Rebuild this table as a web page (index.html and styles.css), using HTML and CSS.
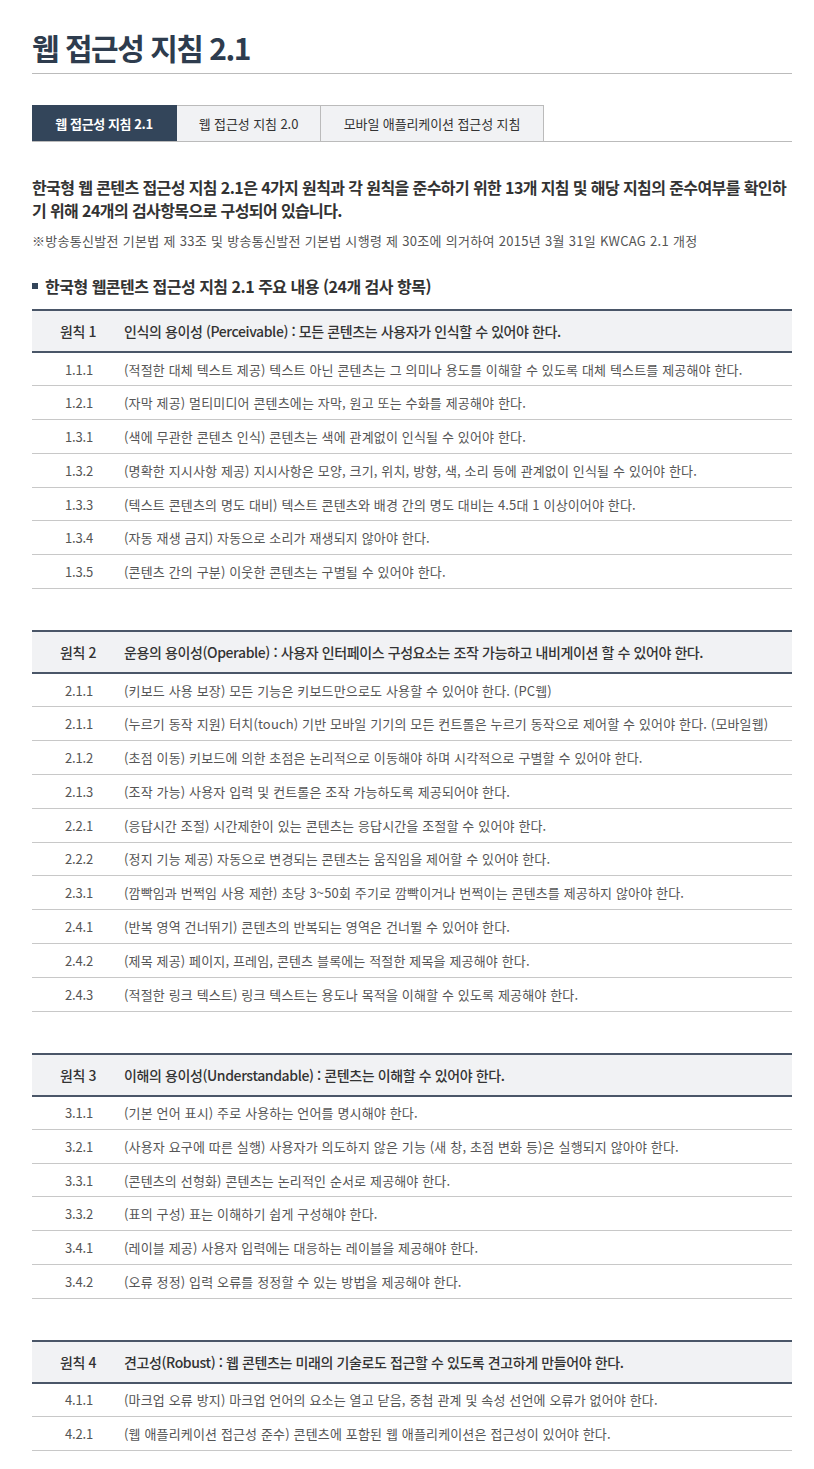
FILE: index.html
```html
<!DOCTYPE html>
<html lang="ko">
<head>
<meta charset="utf-8">
<title>웹 접근성 지침 2.1</title>
<link rel="stylesheet" href="styles.css">
</head>
<body>
<div class="page">
  <h1 class="title">웹 접근성 지침 2.1</h1>

  <ul class="tabs">
    <li class="tab active">웹 접근성 지침 2.1</li>
    <li class="tab">웹 접근성 지침 2.0</li>
    <li class="tab">모바일 애플리케이션 접근성 지침</li>
  </ul>

  <p class="intro">한국형 웹 콘텐츠 접근성 지침 2.1은 4가지 원칙과 각 원칙을 준수하기 위한 13개 지침 및 해당 지침의 준수여부를 확인하기 위해 24개의 검사항목으로 구성되어 있습니다.</p>
  <p class="note">※방송통신발전 기본법 제 33조 및 방송통신발전 기본법 시행령 제 30조에 의거하여 2015년 3월 31일 KWCAG 2.1 개정</p>

  <h2 class="section-title">한국형 웹콘텐츠 접근성 지침 2.1 주요 내용 (24개 검사 항목)</h2>

  <table class="guide">
    <thead><tr><th class="num">원칙 1</th><th class="desc">인식의 용이성 (Perceivable) : 모든 콘텐츠는 사용자가 인식할 수 있어야 한다.</th></tr></thead>
    <tbody>
      <tr><td class="num">1.1.1</td><td class="desc">(적절한 대체 텍스트 제공) 텍스트 아닌 콘텐츠는 그 의미나 용도를 이해할 수 있도록 대체 텍스트를 제공해야 한다.</td></tr>
      <tr><td class="num">1.2.1</td><td class="desc">(자막 제공) 멀티미디어 콘텐츠에는 자막, 원고 또는 수화를 제공해야 한다.</td></tr>
      <tr><td class="num">1.3.1</td><td class="desc">(색에 무관한 콘텐츠 인식) 콘텐츠는 색에 관계없이 인식될 수 있어야 한다.</td></tr>
      <tr><td class="num">1.3.2</td><td class="desc">(명확한 지시사항 제공) 지시사항은 모양, 크기, 위치, 방향, 색, 소리 등에 관계없이 인식될 수 있어야 한다.</td></tr>
      <tr><td class="num">1.3.3</td><td class="desc">(텍스트 콘텐츠의 명도 대비) 텍스트 콘텐츠와 배경 간의 명도 대비는 4.5대 1 이상이어야 한다.</td></tr>
      <tr><td class="num">1.3.4</td><td class="desc">(자동 재생 금지) 자동으로 소리가 재생되지 않아야 한다.</td></tr>
      <tr><td class="num">1.3.5</td><td class="desc">(콘텐츠 간의 구분) 이웃한 콘텐츠는 구별될 수 있어야 한다.</td></tr>
    </tbody>
  </table>

  <table class="guide">
    <thead><tr><th class="num">원칙 2</th><th class="desc">운용의 용이성(Operable) : 사용자 인터페이스 구성요소는 조작 가능하고 내비게이션 할 수 있어야 한다.</th></tr></thead>
    <tbody>
      <tr><td class="num">2.1.1</td><td class="desc">(키보드 사용 보장) 모든 기능은 키보드만으로도 사용할 수 있어야 한다. (PC웹)</td></tr>
      <tr><td class="num">2.1.1</td><td class="desc">(누르기 동작 지원) 터치(touch) 기반 모바일 기기의 모든 컨트롤은 누르기 동작으로 제어할 수 있어야 한다. (모바일웹)</td></tr>
      <tr><td class="num">2.1.2</td><td class="desc">(초점 이동) 키보드에 의한 초점은 논리적으로 이동해야 하며 시각적으로 구별할 수 있어야 한다.</td></tr>
      <tr><td class="num">2.1.3</td><td class="desc">(조작 가능) 사용자 입력 및 컨트롤은 조작 가능하도록 제공되어야 한다.</td></tr>
      <tr><td class="num">2.2.1</td><td class="desc">(응답시간 조절) 시간제한이 있는 콘텐츠는 응답시간을 조절할 수 있어야 한다.</td></tr>
      <tr><td class="num">2.2.2</td><td class="desc">(정지 기능 제공) 자동으로 변경되는 콘텐츠는 움직임을 제어할 수 있어야 한다.</td></tr>
      <tr><td class="num">2.3.1</td><td class="desc">(깜빡임과 번쩍임 사용 제한) 초당 3~50회 주기로 깜빡이거나 번쩍이는 콘텐츠를 제공하지 않아야 한다.</td></tr>
      <tr><td class="num">2.4.1</td><td class="desc">(반복 영역 건너뛰기) 콘텐츠의 반복되는 영역은 건너뛸 수 있어야 한다.</td></tr>
      <tr><td class="num">2.4.2</td><td class="desc">(제목 제공) 페이지, 프레임, 콘텐츠 블록에는 적절한 제목을 제공해야 한다.</td></tr>
      <tr><td class="num">2.4.3</td><td class="desc">(적절한 링크 텍스트) 링크 텍스트는 용도나 목적을 이해할 수 있도록 제공해야 한다.</td></tr>
    </tbody>
  </table>

  <table class="guide">
    <thead><tr><th class="num">원칙 3</th><th class="desc">이해의 용이성(Understandable) : 콘텐츠는 이해할 수 있어야 한다.</th></tr></thead>
    <tbody>
      <tr><td class="num">3.1.1</td><td class="desc">(기본 언어 표시) 주로 사용하는 언어를 명시해야 한다.</td></tr>
      <tr><td class="num">3.2.1</td><td class="desc">(사용자 요구에 따른 실행) 사용자가 의도하지 않은 기능 (새 창, 초점 변화 등)은 실행되지 않아야 한다.</td></tr>
      <tr><td class="num">3.3.1</td><td class="desc">(콘텐츠의 선형화) 콘텐츠는 논리적인 순서로 제공해야 한다.</td></tr>
      <tr><td class="num">3.3.2</td><td class="desc">(표의 구성) 표는 이해하기 쉽게 구성해야 한다.</td></tr>
      <tr><td class="num">3.4.1</td><td class="desc">(레이블 제공) 사용자 입력에는 대응하는 레이블을 제공해야 한다.</td></tr>
      <tr><td class="num">3.4.2</td><td class="desc">(오류 정정) 입력 오류를 정정할 수 있는 방법을 제공해야 한다.</td></tr>
    </tbody>
  </table>

  <table class="guide">
    <thead><tr><th class="num">원칙 4</th><th class="desc">견고성(Robust) : 웹 콘텐츠는 미래의 기술로도 접근할 수 있도록 견고하게 만들어야 한다.</th></tr></thead>
    <tbody>
      <tr><td class="num">4.1.1</td><td class="desc">(마크업 오류 방지) 마크업 언어의 요소는 열고 닫음, 중첩 관계 및 속성 선언에 오류가 없어야 한다.</td></tr>
      <tr><td class="num">4.2.1</td><td class="desc">(웹 애플리케이션 접근성 준수) 콘텐츠에 포함된 웹 애플리케이션은 접근성이 있어야 한다.</td></tr>
    </tbody>
  </table>
</div>
</body>
</html>
```

FILE: styles.css
```css
* { box-sizing: border-box; }
html, body { margin: 0; padding: 0; background: #fff; }
body {
  font-family: "Noto Sans CJK KR", "Noto Sans", sans-serif;
  color: #444;
}
.page {
  width: 760px;
  margin-left: 32px;
  padding-top: 25px;
  padding-bottom: 19px;
}
.title {
  margin: 0;
  font-size: 30px;
  line-height: 44px;
  font-weight: 700;
  letter-spacing: -1.5px;
  color: #2e3c4e;
  padding-bottom: 4px;
  border-bottom: 1px solid #bbbbbb;
}
.tabs {
  list-style: none;
  margin: 31px 0 0;
  padding: 0;
  display: flex;
  border-bottom: 1px solid #bbbbbb;
}
.tab {
  height: 36px;
  line-height: 35px;
  font-size: 13px;
  letter-spacing: -0.1px;
  color: #333;
  background: #f1f2f4;
  border: 1px solid #bbbbbb;
  border-bottom: 0;
  border-left: 0;
  text-align: center;
}
.tab:nth-child(1) { width: 145px; }
.tab:nth-child(2) { width: 144px; }
.tab:nth-child(3) { width: 223px; }
.tab.active {
  background: #33455a;
  border-color: #33455a;
  color: #fff;
  font-weight: 700;
  letter-spacing: -0.4px;
}
.intro {
  margin: 34px 0 0;
  font-size: 16px;
  line-height: 23px;
  font-weight: 700;
  letter-spacing: -0.6px;
  color: #333;
}
.note {
  margin: 9px 0 0;
  font-size: 13px;
  line-height: 20px;
  letter-spacing: 0.3px;
  color: #555;
}
.section-title {
  margin: 23px 0 0;
  font-size: 16px;
  line-height: 24px;
  font-weight: 700;
  letter-spacing: -0.5px;
  color: #333;
  display: flex;
  align-items: center;
  gap: 7px;
}
.section-title::before {
  content: "";
  width: 6px;
  height: 6px;
  background: #33455a;
}
.guide {
  width: 100%;
  border-collapse: collapse;
  margin-top: 11px;
  font-size: 13px;
}
.guide + .guide { margin-top: 41px; }
.guide thead tr {
  background: #f1f2f4;
  border-top: 2px solid #4a5668;
  border-bottom: 2px solid #4a5668;
}
.guide th {
  height: 42px;
  font-size: 14px;
  font-weight: 500;
  letter-spacing: -0.4px;
  color: #333;
  text-align: left;
  padding: 0;
}
.guide td {
  height: 33.8px;
  padding: 0;
  color: #555;
  letter-spacing: 0.15px;
  border-bottom: 1px solid #c8c8c8;
}
.guide .num {
  width: 92px;
  text-align: center;
}
.guide td.num {
  letter-spacing: -0.2px;
  padding-left: 2px;
}
.guide .desc {
  padding-left: 0;
}
```
